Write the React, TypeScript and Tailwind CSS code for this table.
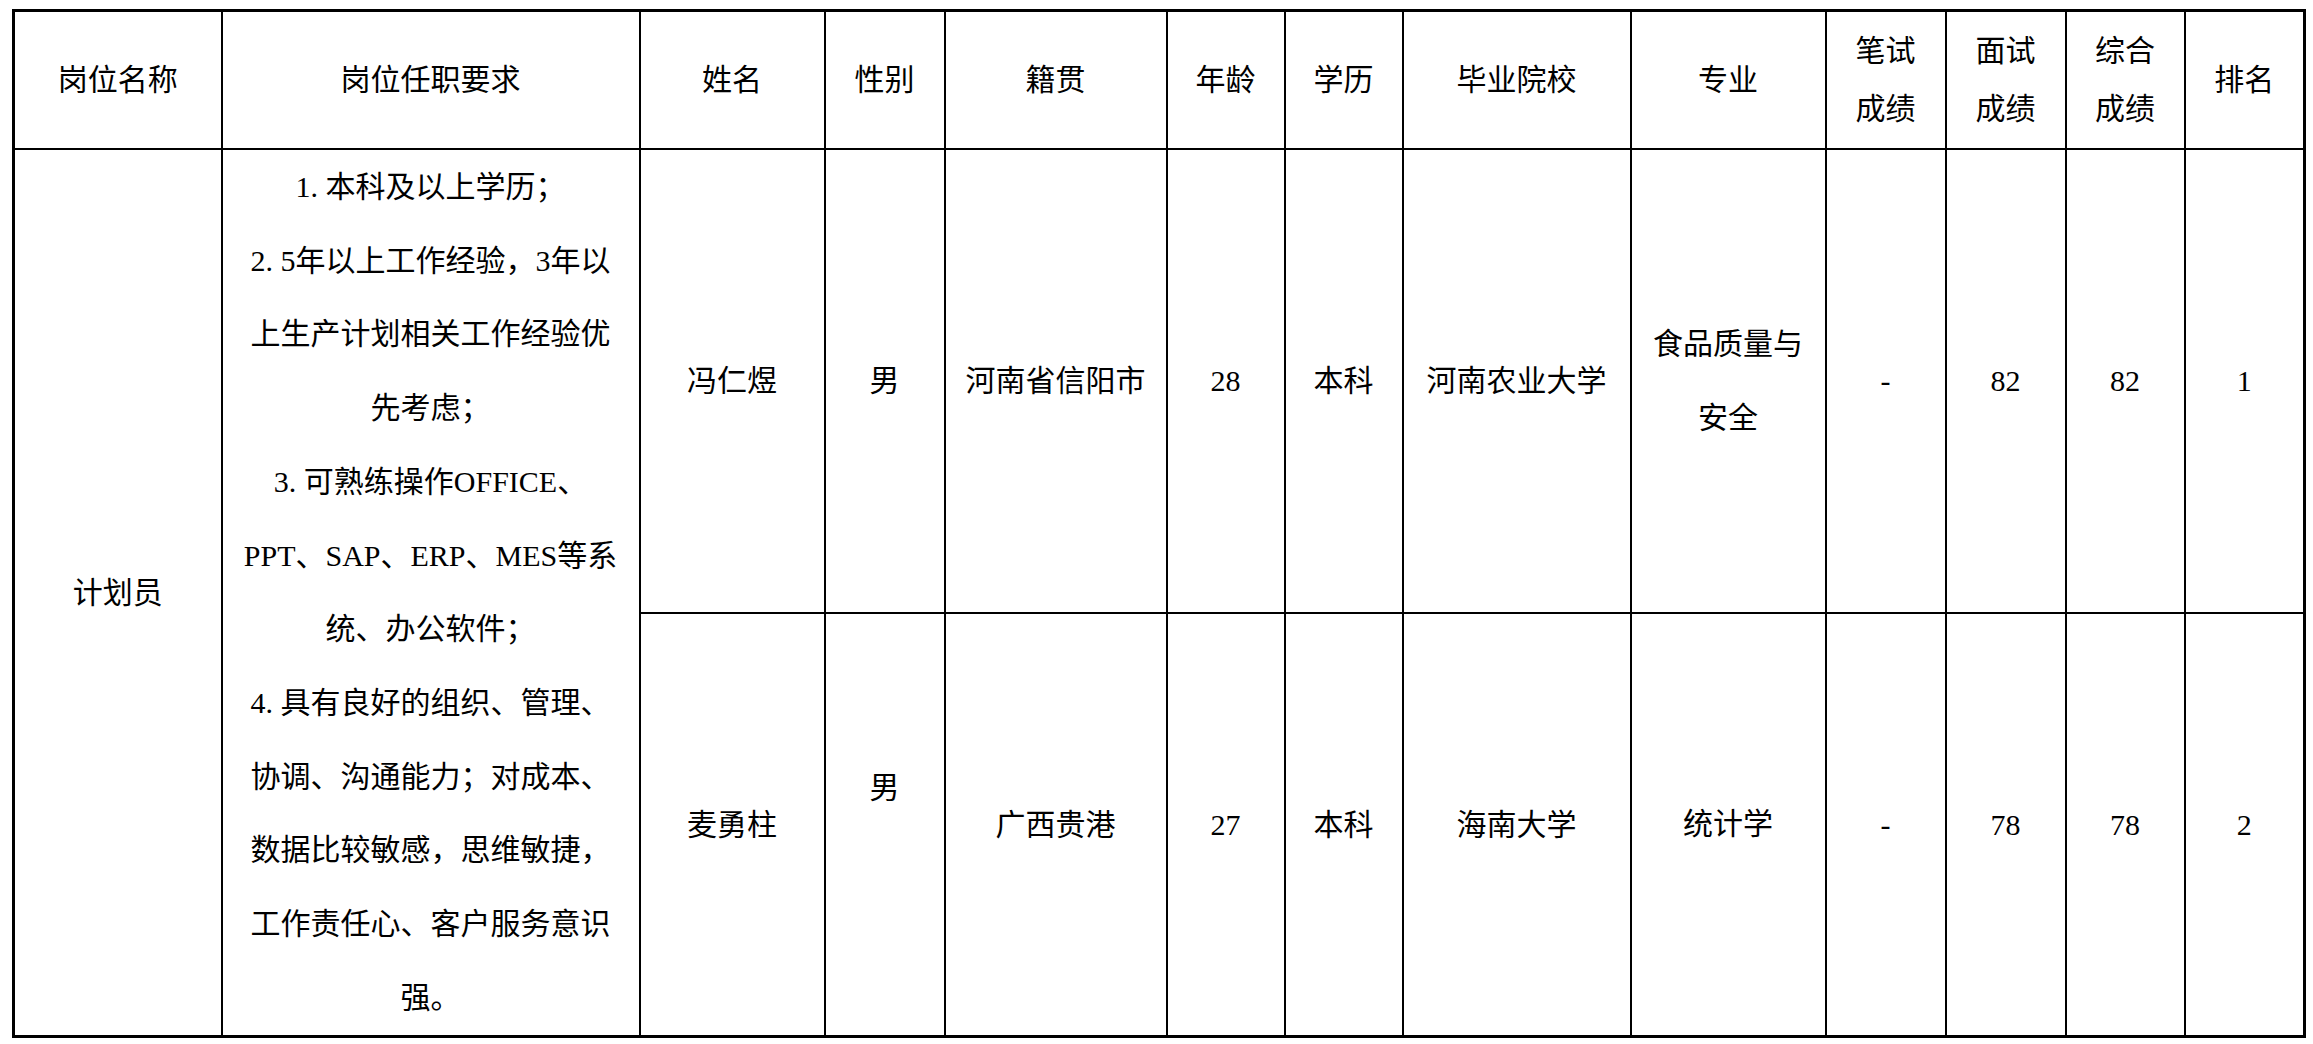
import React from "react"

// Recruitment results table: one post (计划员) with two candidates.

const font = "font-['Liberation_Serif','Noto_Sans_CJK_SC',serif]"

const colWidths = [
  "w-[208px]",
  "w-[418px]",
  "w-[185px]",
  "w-[120px]",
  "w-[222px]",
  "w-[118px]",
  "w-[118px]",
  "w-[228px]",
  "w-[195px]",
  "w-[120px]",
  "w-[120px]",
  "w-[119px]",
  "w-[120px]",
]

const requirementLines = [
  "1.本科及以上学历；",
  "2.5年以上工作经验，3年以",
  "上生产计划相关工作经验优",
  "先考虑；",
  "3.可熟练操作OFFICE、",
  "PPT、SAP、ERP、MES等系",
  "统、办公软件；",
  "4.具有良好的组织、管理、",
  "协调、沟通能力；对成本、",
  "数据比较敏感，思维敏捷，",
  "工作责任心、客户服务意识",
  "强。",
]

type Candidate = {
  name: string
  gender: string
  genderPad?: boolean
  origin: string
  age: string
  degree: string
  school: string
  major: string[]
  written: string
  interview: string
  total: string
  rank: string
}

const candidates: Candidate[] = [
  {
    name: "冯仁煜",
    gender: "男",
    origin: "河南省信阳市",
    age: "28",
    degree: "本科",
    school: "河南农业大学",
    major: ["食品质量与", "安全"],
    written: "-",
    interview: "82",
    total: "82",
    rank: "1",
  },
  {
    name: "麦勇柱",
    gender: "男",
    genderPad: true,
    origin: "广西贵港",
    age: "27",
    degree: "本科",
    school: "海南大学",
    major: ["统计学"],
    written: "-",
    interview: "78",
    total: "78",
    rank: "2",
  },
]

const td = "border-2 border-black p-0 text-center align-middle"

// the source font sets "." half-width, so give the list-number dot its room
function withDots(s: string) {
  const parts = s.split(".")
  return parts.map((p, i) => (
    <React.Fragment key={i}>
      {i > 0 && <span className="inline-block w-[15px] text-left">.</span>}
      {p}
    </React.Fragment>
  ))
}

function Lines({ lines, lh = "leading-[73.7px]" }: { lines: string[]; lh?: string }) {
  return (
    <div className={lh}>
      {lines.map((l, i) => (
        <div key={i} className="whitespace-nowrap">
          {l === "" ? "\u00a0" : withDots(l)}
        </div>
      ))}
    </div>
  )
}

function Head({ lines }: { lines: string[] }) {
  return (
    <th className={`${td} font-normal`}>
      <Lines lines={lines} lh="leading-[58px]" />
    </th>
  )
}

export default function App() {
  return (
    <div className={`min-h-screen bg-white text-[30px] text-black ${font}`}>
      <table className="ml-[12px] mt-[9px] w-[2294px] table-fixed border-collapse border-[3px] border-black">
        <colgroup>
          {colWidths.map((w, i) => (
            <col key={i} className={w} />
          ))}
        </colgroup>
        <thead>
          <tr className="h-[138px]">
            <Head lines={["岗位名称"]} />
            <Head lines={["岗位任职要求"]} />
            <Head lines={["姓名"]} />
            <Head lines={["性别"]} />
            <Head lines={["籍贯"]} />
            <Head lines={["年龄"]} />
            <Head lines={["学历"]} />
            <Head lines={["毕业院校"]} />
            <Head lines={["专业"]} />
            <Head lines={["笔试", "成绩"]} />
            <Head lines={["面试", "成绩"]} />
            <Head lines={["综合", "成绩"]} />
            <Head lines={["排名"]} />
          </tr>
        </thead>
        <tbody>
          {candidates.map((c, i) => (
            <tr key={c.name} className={i === 0 ? "h-[464px]" : "h-[424px]"}>
              {i === 0 && (
                <>
                  <td rowSpan={2} className={td}>
                    计划员
                  </td>
                  <td rowSpan={2} className={td}>
                    <Lines lines={requirementLines} />
                  </td>
                </>
              )}
              <td className={td}>{c.name}</td>
              <td className={td}>
                <Lines lines={c.genderPad ? [c.gender, ""] : [c.gender]} />
              </td>
              <td className={td}>{c.origin}</td>
              <td className={td}>{c.age}</td>
              <td className={td}>{c.degree}</td>
              <td className={td}>{c.school}</td>
              <td className={td}>
                <Lines lines={c.major} />
              </td>
              <td className={td}>{c.written}</td>
              <td className={td}>{c.interview}</td>
              <td className={td}>{c.total}</td>
              <td className={td}>{c.rank}</td>
            </tr>
          ))}
        </tbody>
      </table>
    </div>
  )
}
